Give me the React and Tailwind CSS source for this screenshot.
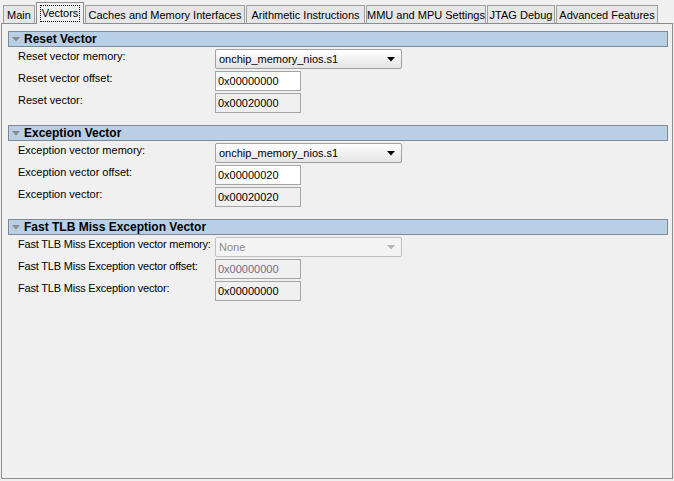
import React from "react";

const tabs = [
  { name: "Main", w: 32 },
  { name: "Vectors", w: 48, active: true },
  { name: "Caches and Memory Interfaces", w: 160 },
  { name: "Arithmetic Instructions", w: 119 },
  { name: "MMU and MPU Settings", w: 120 },
  { name: "JTAG Debug", w: 68 },
  { name: "Advanced Features", w: 102 },
];

const sections = [
  {
    title: "Reset Vector",
    rows: [
      { label: "Reset vector memory:", kind: "combo", value: "onchip_memory_nios.s1" },
      { label: "Reset vector offset:", kind: "edit", value: "0x00000000" },
      { label: "Reset vector:", kind: "ro", value: "0x00020000" },
    ],
  },
  {
    title: "Exception Vector",
    rows: [
      { label: "Exception vector memory:", kind: "combo", value: "onchip_memory_nios.s1" },
      { label: "Exception vector offset:", kind: "edit", value: "0x00000020" },
      { label: "Exception vector:", kind: "ro", value: "0x00020020" },
    ],
  },
  {
    title: "Fast TLB Miss Exception Vector",
    tight: true,
    rows: [
      { label: "Fast TLB Miss Exception vector memory:", kind: "combo-off", value: "None" },
      { label: "Fast TLB Miss Exception vector offset:", kind: "off", value: "0x00000000" },
      { label: "Fast TLB Miss Exception vector:", kind: "ro", value: "0x00000000" },
    ],
  },
];

function Arrow({ color }) {
  return (
    <svg width="8" height="5" viewBox="0 0 8 5" className="ml-auto mr-[6px]">
      <path d="M0 0 H8 L4 4.5 Z" fill={color} />
    </svg>
  );
}

function Control({ kind, value }) {
  if (kind === "combo" || kind === "combo-off") {
    const off = kind === "combo-off";
    return (
      <div
        className={
          "flex items-center w-[187px] h-[20px] rounded-[2px] border pl-[3px] " +
          (off
            ? "border-[#c0c0c0] bg-[#f4f4f4] text-[#8d8d8d]"
            : "border-[#a0a0a0] bg-gradient-to-b from-[#ffffff] to-[#e4e4e4] text-black")
        }
      >
        <span>{value}</span>
        <Arrow color={off ? "#b5b5b5" : "#000000"} />
      </div>
    );
  }
  const cls =
    kind === "edit"
      ? "bg-white border-[#a5a5a5] text-black"
      : kind === "off"
      ? "bg-[#f0f0f0] border-[#a5a5a5] text-[#6d6d8d]"
      : "bg-[#f0f0f0] border-[#a5a5a5] text-black";
  return (
    <div className={"flex items-center w-[86px] h-[20px] border pl-[2px] " + cls}>
      {value}
    </div>
  );
}

function Section({ title, rows, tight }) {
  return (
    <div className="mb-[12px]">
      <div className="flex items-center h-[16px] border border-[#7f8a95] bg-[#b8cfe5]">
        <svg width="8" height="5" viewBox="0 0 8 5" className="ml-[3px] mr-[4px]">
          <path d="M0 0 H8 L4 4.5 Z" fill="#8a8a8a" />
        </svg>
        <span className="font-bold text-[12px] leading-none text-black">{title}</span>
      </div>
      <div className="flex flex-col gap-[2px] mt-[2px]">
        {rows.map((r) => (
          <div key={r.label} className="flex items-start h-[20px]">
            <div
              className={
                "w-[207px] pl-[10px] whitespace-nowrap text-black " +
                (tight ? "tracking-[-0.2px]" : "")
              }
            >
              {r.label}
            </div>
            <Control kind={r.kind} value={r.value} />
          </div>
        ))}
      </div>
    </div>
  );
}

export default function App() {
  return (
    <div
      className="w-[674px] h-[481px] bg-[#f0f0f0] text-[11px] leading-[14px] overflow-hidden"
      style={{ fontFamily: "Tahoma, 'Liberation Sans', Arial, sans-serif" }}
    >
      <div className="flex items-end h-[23px] pl-[3px] gap-[1px]">
        {tabs.map((t) =>
          t.active ? (
            <div
              key={t.name}
              className="relative z-10 -mb-px flex items-center justify-center h-[22px] border border-b-0 border-[#8c8c8c] bg-[#f0f0f0] whitespace-nowrap"
              style={{ width: t.w }}
            >
              <span className="border border-dotted border-black px-[1px] leading-[15px]">{t.name}</span>
            </div>
          ) : (
            <div
              key={t.name}
              className="flex items-center justify-center h-[18px] border border-b-0 border-[#a0a0a0] bg-[#e6e6e6] text-black whitespace-nowrap"
              style={{ width: t.w }}
            >
              {t.name}
            </div>
          )
        )}
      </div>
      <div className="ml-[1px] w-[672px] h-[456px] border border-[#8c8c8c] bg-[#f0f0f0] pt-[7px] pl-[6px] pr-[4px]">
        {sections.map((s) => (
          <Section key={s.title} {...s} />
        ))}
      </div>
    </div>
  );
}
